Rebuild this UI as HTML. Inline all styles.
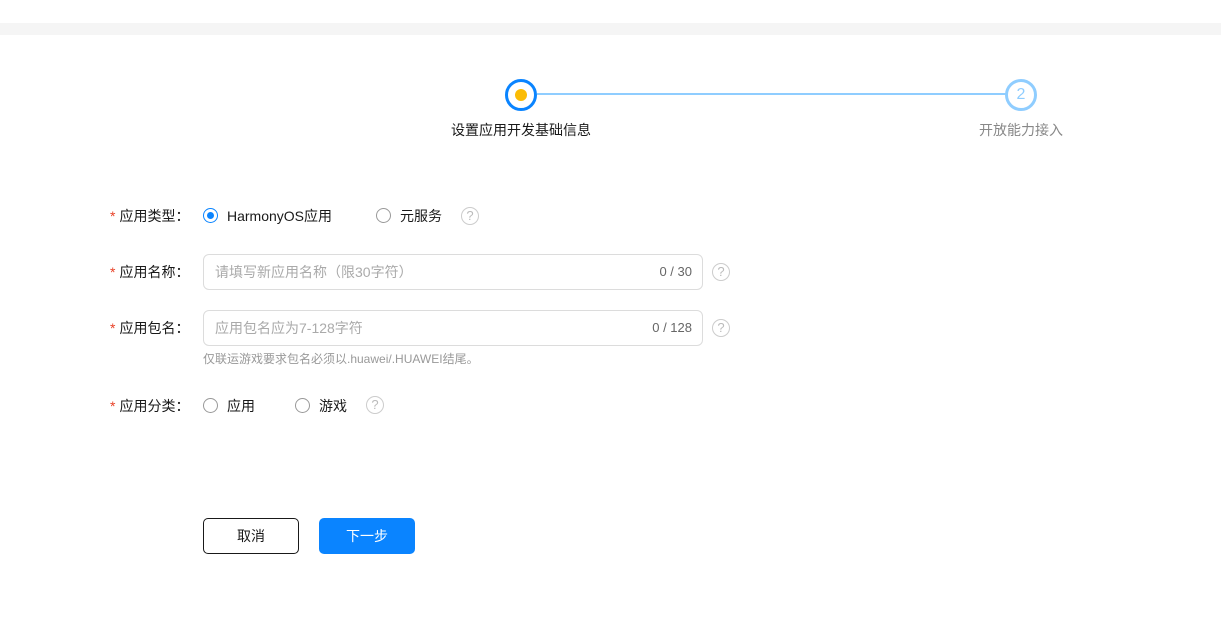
<!DOCTYPE html><html><head><meta charset="utf-8"><style>
body{margin:0;width:1221px;height:632px;background:#fff;font-family:"Liberation Sans","Noto Sans CJK SC",sans-serif;position:relative;overflow:hidden;color:#191919}
.a{position:absolute}
.band{left:0;top:23px;width:1221px;height:12px;background:#f5f5f5}
.lbl{font-size:14px;left:110px}
.lbl b{color:#e84026;font-weight:normal;margin-right:4px}
.radio{width:14px;height:14px;border:1px solid #999;border-radius:50%;box-sizing:border-box}
.q{width:18px;height:18px;border:1px solid #ccc;border-radius:50%;box-sizing:border-box;color:#bbb;font-size:13px;text-align:center;line-height:16px}
.inp{left:203px;width:500px;height:36px;border:1px solid #dcdcdc;border-radius:6px;box-sizing:border-box;font-size:14px;color:#aaa;line-height:34px;padding-left:11px}
.inp span{position:absolute;right:10px;font-size:13px;color:#666}
.t{font-size:14px}
</style></head><body>
<div class="a band"></div>
<div class="a" style="left:537px;top:93px;width:470px;height:2px;background:#8fcdff"></div>
<div class="a" style="left:505px;top:79px;width:32px;height:32px;border:3px solid #0a84ff;border-radius:50%;box-sizing:border-box;background:#fff"></div>
<div class="a" style="left:515px;top:89px;width:12px;height:12px;border-radius:50%;background:#fbbc05"></div>
<div class="a" style="left:1005px;top:79px;width:32px;height:32px;border:3px solid #8fcdff;border-radius:50%;box-sizing:border-box;background:#fff;color:#8fcdff;font-size:16px;text-align:center;line-height:26px">2</div>
<div class="a t" style="left:451px;top:120px">设置应用开发基础信息</div>
<div class="a t" style="left:979px;top:120px;color:#888">开放能力接入</div>

<div class="a lbl" style="top:206px"><b>*</b>应用类型：</div>
<div class="a" style="left:203px;top:208px;width:15px;height:15px;border:1px solid #0a84ff;border-radius:50%;box-sizing:border-box"></div>
<div class="a" style="left:207px;top:212px;width:7px;height:7px;border-radius:50%;background:#0a84ff"></div>
<div class="a t" style="left:227px;top:206px">HarmonyOS应用</div>
<div class="a radio" style="left:376px;top:208px;width:15px;height:15px"></div>
<div class="a t" style="left:400px;top:206px">元服务</div>
<div class="a q" style="left:461px;top:207px">?</div>

<div class="a lbl" style="top:262px"><b>*</b>应用名称：</div>
<div class="a inp" style="top:254px">请填写新应用名称（限30字符）<span>0 / 30</span></div>
<div class="a q" style="left:712px;top:263px">?</div>

<div class="a lbl" style="top:318px"><b>*</b>应用包名：</div>
<div class="a inp" style="top:310px">应用包名应为7-128字符<span>0 / 128</span></div>
<div class="a q" style="left:712px;top:319px">?</div>
<div class="a" style="left:203px;top:350px;font-size:12px;color:#999">仅联运游戏要求包名必须以.huawei/.HUAWEI结尾。</div>

<div class="a lbl" style="top:396px"><b>*</b>应用分类：</div>
<div class="a radio" style="left:203px;top:398px;width:15px;height:15px"></div>
<div class="a t" style="left:227px;top:396px">应用</div>
<div class="a radio" style="left:295px;top:398px;width:15px;height:15px"></div>
<div class="a t" style="left:319px;top:396px">游戏</div>
<div class="a q" style="left:366px;top:396px">?</div>

<div class="a" style="left:203px;top:518px;width:96px;height:36px;border:1px solid #191919;border-radius:5px;box-sizing:border-box;text-align:center;line-height:34px;font-size:14px">取消</div>
<div class="a" style="left:319px;top:518px;width:96px;height:36px;background:#0a84ff;border-radius:5px;color:#fff;text-align:center;line-height:36px;font-size:14px">下一步</div>
</body></html>
